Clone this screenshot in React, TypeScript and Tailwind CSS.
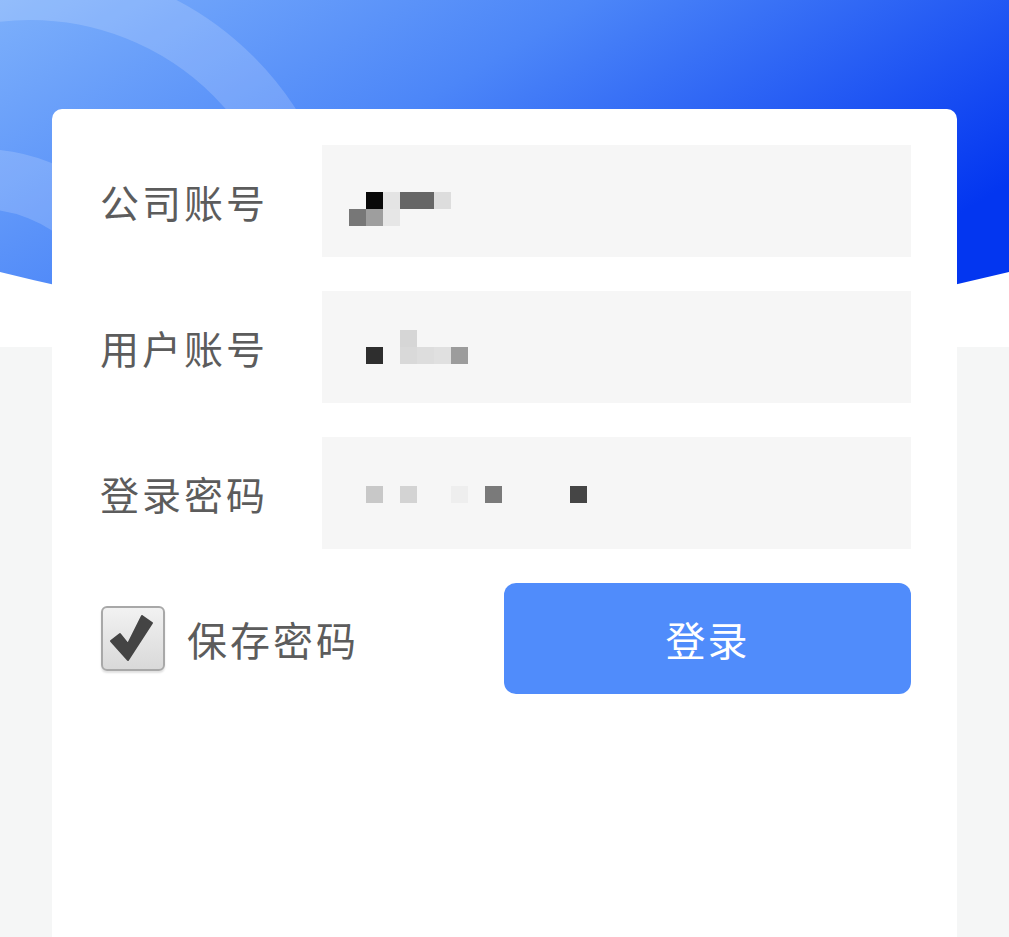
import React from "react";

type Cell = string | null;

const FONT = { fontFamily: '"Noto Sans CJK SC", "Noto Sans", sans-serif' };

const Mosaic = ({ rows, className }: { rows: Cell[][]; className: string }) => (
  <div className={`flex flex-col ${className}`}>
    {rows.map((row, i) => (
      <div key={i} className="flex">
        {row.map((c, j) => (
          <div
            key={j}
            className="w-[17px] h-[17px]"
            style={{ backgroundColor: c ?? "transparent" }}
          />
        ))}
      </div>
    ))}
  </div>
);

const Field = ({ label, rows, pad }: { label: string; rows: Cell[][]; pad: string }) => (
  <div className="flex items-center">
    <div className="w-[222px] text-[39px] tracking-[3px] text-[#5c5c5c] leading-none">
      {label}
    </div>
    <div className="flex-1 h-[112px] bg-[#f6f6f6]">
      <Mosaic rows={rows} className={pad} />
    </div>
  </div>
);

const Header = () => (
  <div className="h-[347px] bg-white">
    <svg width="100%" height="347" viewBox="0 0 1009 347" preserveAspectRatio="none">
      <defs>
        <linearGradient id="hg" x1="0" y1="0" x2="1" y2="0.55">
          <stop offset="0" stopColor="#7db0fb" />
          <stop offset="0.45" stopColor="#4c86f8" />
          <stop offset="1" stopColor="#0336f0" />
        </linearGradient>
        <clipPath id="hc">
          <path d="M0 0H1009V272Q504.5 398 0 272Z" />
        </clipPath>
      </defs>
      <path d="M0 0H1009V272Q504.5 398 0 272Z" fill="url(#hg)" />
      <g clipPath="url(#hc)">
        <circle cx="30" cy="280" r="288" fill="none" stroke="#ffffff" strokeOpacity="0.17" strokeWidth="56" />
        <circle cx="-20" cy="340" r="161" fill="none" stroke="#ffffff" strokeOpacity="0.17" strokeWidth="60" />
      </g>
    </svg>
  </div>
);

export default function App() {
  return (
    <div className="min-h-screen flex flex-col bg-[#f5f6f6] overflow-hidden" style={FONT}>
      <Header />
      <div className="flex-1 -mt-[238px] mx-[52px] bg-white rounded-t-[10px] pl-[48px] pr-[46px] pt-[36px] min-h-[828px]">
        <div className="flex flex-col gap-[34px]">
          <Field
            label="公司账号"
            pad="pt-[47px] pl-[27px]"
            rows={[
              [null, "#080808", "#e4e4e4", "#666666", "#666666", "#dddddd"],
              ["#777777", "#9e9e9e", "#e6e6e6", null, null, null],
            ]}
          />
          <Field
            label="用户账号"
            pad="pt-[39px] pl-[44px]"
            rows={[
              [null, null, "#d6d6d6", null, null, null],
              ["#2e2e2e", null, "#d9d9d9", "#dddddd", "#e0e0e0", "#9c9c9c"],
            ]}
          />
          <Field
            label="登录密码"
            pad="pt-[49px] pl-[44px]"
            rows={[
              [
                "#c8c8c8",
                null,
                "#d3d3d3",
                null,
                null,
                "#eeeeee",
                null,
                "#7a7a7a",
                null,
                null,
                null,
                null,
                "#454545",
              ],
            ]}
          />
        </div>
        <div className="mt-[34px] flex items-center justify-between">
          <div className="flex items-center gap-[22px] pl-[1px]">
            <div className="w-[64px] h-[65px] rounded-[6px] border-2 border-[#a8a8a8] bg-gradient-to-b from-[#f2f2f2] to-[#d9d9d9] shadow-[0_2px_2px_rgba(0,0,0,0.12)] flex items-center justify-center">
              <svg width="60" height="61" viewBox="0 0 60 61">
                <polygon
                  points="8,33 17,26 25,36 39,8 49,15 25,52"
                  fill="#444444"
                  stroke="#444444"
                  strokeWidth="2"
                  strokeLinejoin="round"
                />
              </svg>
            </div>
            <span className="text-[40px] tracking-[3px] text-[#5c5c5c] leading-none">保存密码</span>
          </div>
          <button
            type="button"
            className="w-[407px] h-[111px] rounded-[12px] bg-[#508cfb] text-white text-[40px] tracking-[2px] leading-none"
          >
            登录
          </button>
        </div>
      </div>
    </div>
  );
}
